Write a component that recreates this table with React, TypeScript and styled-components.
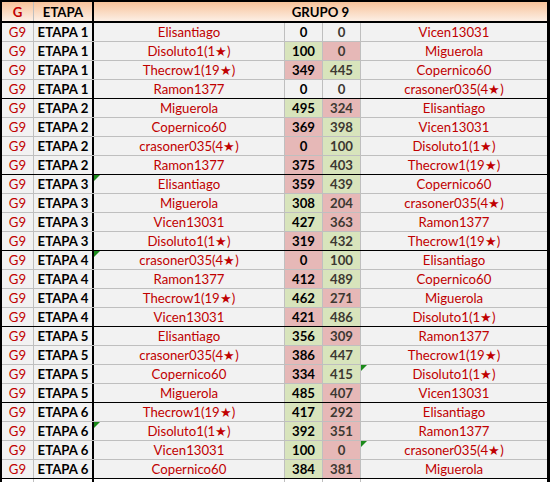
import styled, { createGlobalStyle } from "styled-components";

const GlobalStyle = createGlobalStyle`
  body {
    margin: 0;
    background: #ffffff;
    font-family: Lato, "Liberation Sans", sans-serif;
  }
`;

type Match = [string, number, number, string];

const stages: Match[][] = [
  [
    ["Elisantiago", 0, 0, "Vicen13031"],
    ["Disoluto1(1★)", 100, 0, "Miguerola"],
    ["Thecrow1(19★)", 349, 445, "Copernico60"],
    ["Ramon1377", 0, 0, "crasoner035(4★)"],
  ],
  [
    ["Miguerola", 495, 324, "Elisantiago"],
    ["Copernico60", 369, 398, "Vicen13031"],
    ["crasoner035(4★)", 0, 100, "Disoluto1(1★)"],
    ["Ramon1377", 375, 403, "Thecrow1(19★)"],
  ],
  [
    ["Elisantiago", 359, 439, "Copernico60"],
    ["Miguerola", 308, 204, "crasoner035(4★)"],
    ["Vicen13031", 427, 363, "Ramon1377"],
    ["Disoluto1(1★)", 319, 432, "Thecrow1(19★)"],
  ],
  [
    ["crasoner035(4★)", 0, 100, "Elisantiago"],
    ["Ramon1377", 412, 489, "Copernico60"],
    ["Thecrow1(19★)", 462, 271, "Miguerola"],
    ["Vicen13031", 421, 486, "Disoluto1(1★)"],
  ],
  [
    ["Elisantiago", 356, 309, "Ramon1377"],
    ["crasoner035(4★)", 386, 447, "Thecrow1(19★)"],
    ["Copernico60", 334, 415, "Disoluto1(1★)"],
    ["Miguerola", 485, 407, "Vicen13031"],
  ],
  [
    ["Thecrow1(19★)", 417, 292, "Elisantiago"],
    ["Disoluto1(1★)", 392, 351, "Ramon1377"],
    ["Vicen13031", 100, 0, "crasoner035(4★)"],
    ["Copernico60", 384, 381, "Miguerola"],
  ],
];

// cells flagged with the little green corner mark: "stage-row-column"
const flagged = new Set(["2-0-name1", "3-0-name1", "4-2-name2", "5-1-name1", "5-2-name2"]);

const Sheet = styled.div`
  width: 550px;
  box-sizing: border-box;
  border-top: 2px solid #000;
  border-left: 2px solid #000;
  border-right: 3px solid #000;
`;

const Row = styled.div<{ $last?: boolean; $head?: boolean; $blank?: boolean }>`
  display: grid;
  grid-template-columns: 32px 60px 191px 38px 38px 186px;
  height: ${(p) => (p.$head ? "21px" : "19px")};
  box-sizing: border-box;
  border-bottom: ${(p) =>
    p.$head ? "2px solid #000" : p.$last ? "1px solid #000" : p.$blank ? "none" : "1px solid #bfbfbf"};
  background: ${(p) =>
    p.$head ? "linear-gradient(#f8c39a, #fcefe5)" : p.$blank ? "#ffffff" : "#f2f2f2"};
`;

const Cell = styled.div<{ $edge?: "grey" | "black" | "none"; $fill?: "win" | "lose" }>`
  position: relative;
  box-sizing: border-box;
  display: flex;
  align-items: center;
  justify-content: center;
  font-size: 13.2px;
  line-height: 18px;
  white-space: nowrap;
  overflow: hidden;
  border-right: ${(p) =>
    p.$edge === "black" ? "2px solid #000" : p.$edge === "none" ? "none" : "1px solid #bfbfbf"};
  background: ${(p) => (p.$fill === "win" ? "#d8e4bc" : p.$fill === "lose" ? "#e6b8b7" : "transparent")};
`;

const GroupCell = styled(Cell)`
  color: #c00000;
`;

const StageCell = styled(Cell)`
  font-weight: 700;
  color: #000;
`;

const NameCell = styled(Cell)`
  color: #c00000;
`;

const ScoreCell = styled(Cell)<{ $second?: boolean }>`
  font-weight: 700;
  color: ${(p) => (p.$second ? "#3d3832" : "#000")};
`;

const HeadCell = styled(Cell)<{ $span?: number; $red?: boolean }>`
  grid-column: span ${(p) => p.$span ?? 1};
  font-weight: 700;
  color: ${(p) => (p.$red ? "#c00000" : "#000")};
  padding-top: 1px;
`;

const Mark = styled.span`
  position: absolute;
  top: 0;
  left: 0;
  width: 0;
  height: 0;
  border-top: 6px solid #1b8a1b;
  border-right: 6px solid transparent;
`;

const fillFor = (a: number, b: number): "win" | "lose" | undefined => {
  if (a === b) return undefined;
  return a > b ? "win" : "lose";
};

function App() {
  return (
    <>
      <GlobalStyle />
      <Sheet>
        <Row $head>
          <HeadCell $red>G</HeadCell>
          <HeadCell $edge="black">ETAPA</HeadCell>
          <HeadCell $span={4} $edge="none">
            GRUPO 9
          </HeadCell>
        </Row>
        {stages.map((matches, s) =>
          matches.map(([home, a, b, away], r) => (
            <Row key={`${s}-${r}`} $last={r === matches.length - 1}>
              <GroupCell>G9</GroupCell>
              <StageCell $edge="black">ETAPA {s + 1}</StageCell>
              <NameCell>
                {flagged.has(`${s}-${r}-name1`) && <Mark />}
                {home}
              </NameCell>
              <ScoreCell $fill={fillFor(a, b)}>{a}</ScoreCell>
              <ScoreCell $second $fill={fillFor(b, a)}>
                {b}
              </ScoreCell>
              <NameCell $edge="none">
                {flagged.has(`${s}-${r}-name2`) && <Mark />}
                {away}
              </NameCell>
            </Row>
          ))
        )}
        <Row $blank>
          <Cell />
          <Cell $edge="black" />
          <Cell />
          <Cell />
          <Cell />
          <Cell $edge="none" />
        </Row>
      </Sheet>
    </>
  );
}

export default App;
